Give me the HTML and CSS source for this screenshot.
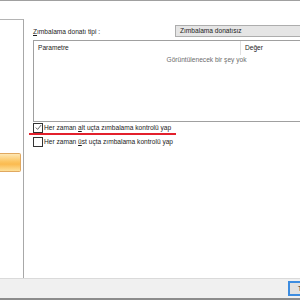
FILE: index.html
```html
<!DOCTYPE html>
<html lang="tr">

<head>
    <meta charset="UTF-8">
    <title>Zımbalama</title>
    <link rel="stylesheet" href="styles.css">
</head>

<body>
    <div class="window">
        <div class="top-line"></div>

        <div class="main">
            <div class="side">
                <div class="side-button"></div>
            </div>

            <div class="content">
                <div class="type-row">
                    <span class="type-label"><u>Z</u>ımbalama donatı tipi :</span>
                    <div class="combo">Zımbalama donatısız</div>
                </div>

                <div class="list">
                    <div class="list-head">
                        <div class="col-param">Parametre</div>
                        <div class="col-value">Değer</div>
                    </div>
                    <div class="list-empty">Görüntülenecek bir şey yok</div>
                </div>

                <label class="check-row">
                    <span class="box">
                        <svg width="7" height="7" viewBox="0 0 7 7"><path d="M0.8 3.6 L2.6 5.4 L6.2 1" fill="none" stroke="#555" stroke-width="0.9"/></svg>
                    </span>
                    <span>Her zaman <u>a</u>lt uçta zımbalama kontrolü yap</span>
                    <span class="red-mark"></span>
                </label>

                <label class="check-row">
                    <span class="box"></span>
                    <span>Her zaman <u>ü</u>st uçta zımbalama kontrolü yap</span>
                </label>
            </div>
        </div>

        <div class="bottom-bar">
            <div class="ok-button">Tamam</div>
        </div>
        <div class="bottom-line"></div>
    </div>
</body>

</html>
```

FILE: styles.css
```css
body {
    margin: 0;
    width: 300px;
    height: 300px;
    overflow: hidden;
    background: #ffffff;
    font-family: "Liberation Sans", Arial, sans-serif;
    font-size: 6.6px;
    color: #1c1c1c;
}

.window {
    width: 300px;
    height: 300px;
    display: flex;
    flex-direction: column;
    overflow: hidden;
}

.top-line {
    height: 1px;
    background: #a0a0a0;
    flex-shrink: 0;
}

.main {
    height: 277px;
    display: flex;
    flex-shrink: 0;
}

.side {
    width: 23px;
    margin-top: 18px;
    border-top: 1px solid #b4b4b4;
    border-right: 1px solid #a8a8a8;
    flex-shrink: 0;
}

.side-button {
    margin-top: 133px;
    width: 20px;
    height: 17px;
    border: 1px solid #e0a860;
    border-left: none;
    border-radius: 0 2px 2px 0;
    background: linear-gradient(#fde7b4 0%, #fcc460 45%, #fbbb50 60%, #fde09a 100%);
}

.content {
    padding-left: 9px;
    width: 360px;
    flex-shrink: 0;
}

.type-row {
    margin-top: 24px;
    display: flex;
    align-items: center;
    height: 12px;
}

.type-label {
    width: 142px;
}

.combo {
    width: 160px;
    height: 10px;
    line-height: 10px;
    padding-left: 4px;
    border: 1px solid #adadad;
    background: #e5e5e5;
}

.list {
    margin-top: 3px;
    height: 80px;
    width: 345px;
    border: 1px solid #a0a0a0;
    border-right: none;
}

.list-head {
    display: flex;
    height: 14px;
    line-height: 14px;
}

.col-param {
    width: 202px;
    padding-left: 4px;
    border-right: 1px solid #e0e0e0;
}

.col-value {
    padding-left: 4px;
}

.list-empty {
    text-align: center;
    color: #6d6d6d;
    margin-top: 1px;
}

.check-row {
    position: relative;
    display: flex;
    align-items: center;
    gap: 1px;
    height: 9px;
    margin-top: 1px;
    color: #1c1c1c;
}

.check-row + .check-row {
    margin-top: 5px;
}

.box {
    width: 8px;
    height: 8px;
    border: 1px solid #333333;
    background: #ffffff;
    display: flex;
    align-items: center;
    justify-content: center;
    flex-shrink: 0;
}

.red-mark {
    position: absolute;
    left: -4px;
    top: 10px;
    width: 147px;
    height: 2px;
    background: #e3202c;
}

.bottom-bar {
    height: 19px;
    border-top: 1px solid #dadada;
    background: #f0f0f0;
    flex-shrink: 0;
    display: flex;
    align-items: center;
    padding-left: 288px;
}

.ok-button {
    width: 60px;
    height: 11px;
    border: 2px solid #3c8ce0;
    background: #e1e1e1;
    padding-left: 8px;
    line-height: 11px;
    flex-shrink: 0;
}

.bottom-line {
    height: 2px;
    background: #8c8c8c;
    flex-shrink: 0;
}
```
